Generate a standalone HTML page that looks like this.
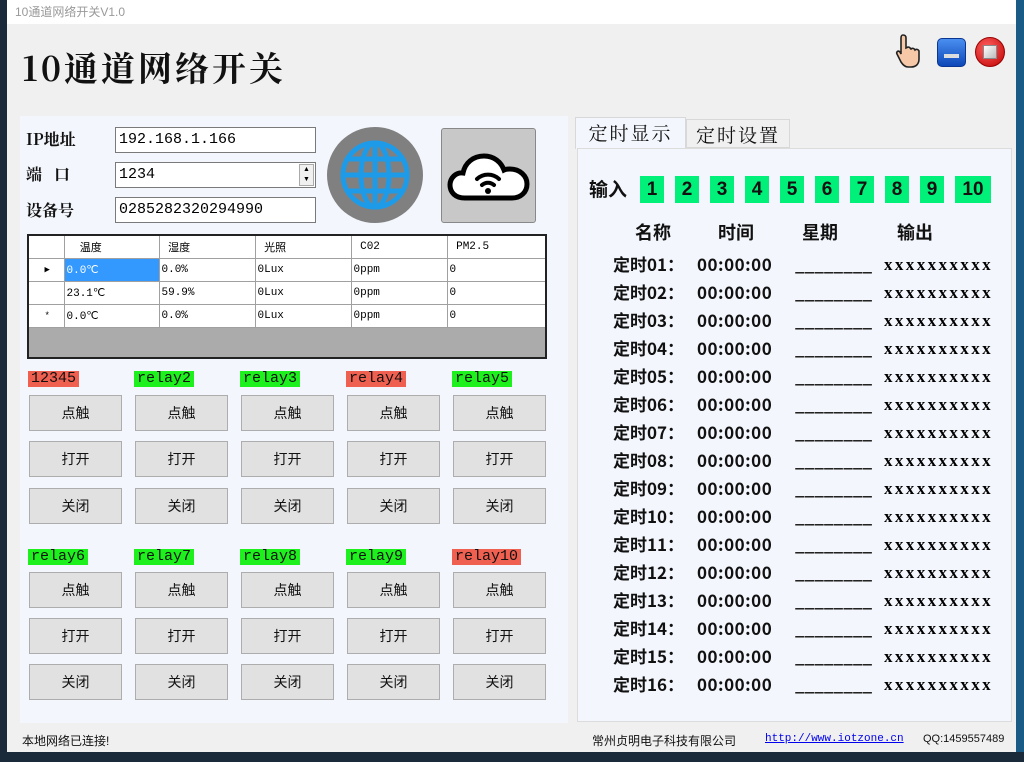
<!DOCTYPE html>
<html><head><meta charset="utf-8"><style>
*{margin:0;padding:0;box-sizing:border-box}
body{width:1024px;height:762px;overflow:hidden;background:#1b2a3a;font-family:"Liberation Sans","Noto Sans CJK SC",sans-serif;position:relative}
.a{position:absolute}
.win{left:7px;top:0;width:1009px;height:752px;background:#f0f0f0}
.tb{left:7px;top:0;width:1009px;height:24px;background:#fff;color:#999;font-size:12px;padding:3px 0 0 8px}
.title{left:22px;top:42px;font-family:"Noto Serif CJK SC",serif;font-weight:bold;font-size:34px;color:#111;letter-spacing:3px}
.lp{left:20px;top:116px;width:548px;height:607px;background:#f3f6fc}
.lbl{font-family:"Noto Serif CJK SC",serif;font-weight:bold;font-size:16px;color:#111}
.inp{background:#fff;border:1px solid #7a7a7a;font-family:"Liberation Mono","Noto Sans CJK SC",monospace;font-size:15px;padding:3px 3px;color:#000}
table{border-collapse:collapse;font-family:"Liberation Mono",monospace;font-size:11px}
td{border:1px solid #a0a0a0;height:23px;padding-left:2px;background:#fff}
.rl{height:16px;font-family:"Liberation Mono",monospace;font-size:15px;padding:0 3px;line-height:16px;color:#111}
.g{background:#1ef01e}.r{background:#f06050}
.bt{width:93px;height:36px;background:#e1e1e1;border:1px solid #adadad;font-size:14px;text-align:center;line-height:34px;color:#111}
.rp{left:577px;top:148px;width:435px;height:574px;background:#f3f6fc;border:1px solid #dcdcdc}
.tab{font-family:"Noto Serif CJK SC",serif;font-size:19px;color:#111;border:1px solid #d8d8d8;text-align:center;letter-spacing:2px}
.nb{width:24px;height:27px;background:#00f07a;font-weight:bold;font-size:19px;text-align:center;line-height:27px;color:#111}
.row{font-weight:bold;font-size:17px;color:#111;white-space:pre;font-family:"Noto Sans CJK SC",sans-serif;line-height:24px;height:24px}
.xx{font-family:"Liberation Serif",serif;font-weight:bold;font-size:17px;letter-spacing:2.4px;line-height:24px}
.st{font-size:12px;color:#111}
</style></head><body>
<div class="a win"></div>
<div class="a tb">10通道网络开关V1.0</div>
<div class="a" style="left:1016px;top:0;width:8px;height:752px;background:#1a5b86"></div>
<div class="a title">10通道网络开关</div>
<svg class="a" style="left:895px;top:33px" width="30" height="36" viewBox="0 0 30 36"><path d="M8 2c2 0 3 1 3 3v10l2-1c2 0 2 1 3 2 1-1 3-1 4 1 1-1 3-1 4 1v8c0 5-3 8-8 8h-3c-3 0-5-2-7-5L2 21c-1-2 1-4 3-2l1 2V5c0-2 1-3 2-3z" fill="#f7c8a8" stroke="#222" stroke-width="1.6"/></svg>
<div class="a" style="left:937px;top:38px;width:29px;height:29px;border-radius:5px;background:linear-gradient(#4a8ff0,#0d47b8);border:1px solid #0a3590"><div style="margin:15px 0 0 6px;width:15px;height:4px;background:#ddd"></div></div>
<div class="a" style="left:975px;top:37px;width:30px;height:30px;border-radius:50%;background:radial-gradient(circle at 40% 35%,#ff6060,#c00000);border:1px solid #900"><div style="margin:7px;width:14px;height:14px;background:linear-gradient(135deg,#fff,#bbb);border:1px solid #888"></div></div>

<div class="a lp"></div>
<div class="a lbl" style="left:26px;top:127px">IP地址</div>
<div class="a lbl" style="left:26px;top:162px">端&nbsp;&nbsp;&nbsp;口</div>
<div class="a lbl" style="left:26px;top:198px">设备号</div>
<div class="a inp" style="left:115px;top:127px;width:201px;height:26px">192.168.1.166</div>
<div class="a inp" style="left:115px;top:162px;width:201px;height:26px">1234</div>
<div class="a" style="left:299px;top:164px;width:15px;height:22px;border:1px solid #aaa;background:#f0f0f0;font-size:7px;line-height:10px;text-align:center">▲<br>▼</div>
<div class="a inp" style="left:115px;top:197px;width:201px;height:26px">0285282320294990</div>
<div class="a" style="left:327px;top:127px;width:96px;height:96px;border-radius:50%;background:#808080"></div>
<svg class="a" style="left:339px;top:138px" width="72" height="74" viewBox="0 0 72 74"><g fill="none" stroke="#1e9be8" stroke-width="5"><circle cx="36" cy="37" r="32"/><ellipse cx="36" cy="37" rx="14" ry="32"/><line x1="36" y1="5" x2="36" y2="69"/><line x1="4" y1="37" x2="68" y2="37"/><path d="M10 21h52M10 53h52"/></g></svg>
<div class="a" style="left:441px;top:128px;width:95px;height:95px;background:#c8c8c8;border:1px solid #888;border-radius:3px"></div>
<svg class="a" style="left:447px;top:152px" width="84" height="50" viewBox="0 0 84 50"><path d="M18 46C8 46 3 40 3 33s6-13 13-12c2-10 10-17 21-17 10 0 17 6 20 14 2-1 4-1 6-1 10 0 17 7 17 15s-6 14-15 14z" fill="#fff" stroke="#000" stroke-width="5"/><g fill="none" stroke="#000" stroke-width="4" stroke-linecap="round"><path d="M30 27a16 16 0 0 1 22 0"/><path d="M35 33a9 9 0 0 1 12 0"/></g><circle cx="41" cy="39" r="3" fill="#000"/></svg>

<table class="a" style="left:27px;top:234px;width:520px;border:2px solid #222">
<tr><td style="width:36px"></td><td style="width:95px">&nbsp;&nbsp;温度</td><td style="width:96px">&nbsp;湿度</td><td style="width:96px">&nbsp;光照</td><td style="width:96px">&nbsp;C02</td><td>&nbsp;PM2.5</td></tr>
<tr><td style="font-size:9px;text-align:center">▶</td><td style="background:#3399ff;color:#fff">0.0℃</td><td>0.0%</td><td>0Lux</td><td>0ppm</td><td>0</td></tr>
<tr><td></td><td>23.1℃</td><td>59.9%</td><td>0Lux</td><td>0ppm</td><td>0</td></tr>
<tr><td style="text-align:center;font-size:9px">*</td><td>0.0℃</td><td>0.0%</td><td>0Lux</td><td>0ppm</td><td>0</td></tr>
<tr><td colspan="6" style="height:31px;background:#ababab;border:none"></td></tr>
</table>

<div class="a rl r" style="left:28px;top:371px">12345</div>
<div class="a rl g" style="left:134px;top:371px">relay2</div>
<div class="a rl g" style="left:240px;top:371px">relay3</div>
<div class="a rl r" style="left:346px;top:371px">relay4</div>
<div class="a rl g" style="left:452px;top:371px">relay5</div>
<div class="a rl g" style="left:28px;top:549px">relay6</div>
<div class="a rl g" style="left:134px;top:549px">relay7</div>
<div class="a rl g" style="left:240px;top:549px">relay8</div>
<div class="a rl g" style="left:346px;top:549px">relay9</div>
<div class="a rl r" style="left:452px;top:549px">relay10</div>

<div id="btns"></div>
<script>
var h='',xs=[29,135,241,347,453],ys=[395,441,488,572,618,664],t=['点触','打开','关闭','点触','打开','关闭'];
ys.forEach(function(y,i){xs.forEach(function(x){h+='<div class="a bt" style="left:'+x+'px;top:'+y+'px">'+t[i]+'</div>'})});
document.getElementById('btns').innerHTML=h;
</script>

<div class="a tab" style="left:575px;top:117px;width:111px;height:32px;background:#f3f6fc;border-bottom:none;line-height:30px">定时显示</div>
<div class="a tab" style="left:686px;top:119px;width:104px;height:29px;background:#f0f0f0;line-height:29px">定时设置</div>
<div class="a rp"></div>
<div class="a row" style="left:589px;top:177px;font-size:19px">输入</div>
<div id="nums"></div>
<div class="a row" style="left:635px;top:220px;font-size:18px">名称</div>
<div class="a row" style="left:718px;top:220px;font-size:18px">时间</div>
<div class="a row" style="left:802px;top:220px;font-size:18px">星期</div>
<div class="a row" style="left:897px;top:220px;font-size:18px">输出</div>
<div id="rows"></div>
<script>
var n='',xs2=[640,675,710,745,780,815,850,885,920,955];
xs2.forEach(function(x,i){n+='<div class="a nb" style="left:'+x+'px;top:176px;'+(i==9?'width:36px':'')+'">'+(i+1)+'</div>'});
document.getElementById('nums').innerHTML=n;
var r='';
for(var i=1;i<=16;i++){var y=252+(i-1)*28;var s=(i<10?'0':'')+i;
r+='<div class="a row" style="left:613px;top:'+y+'px">定时'+s+'：</div><div class="a row" style="left:697px;top:'+y+'px;letter-spacing:0.5px">00:00:00</div><div class="a row" style="left:795px;top:'+y+'px">________</div><div class="a xx" style="left:884px;top:'+(y+1)+'px">xxxxxxxxxx</div>';}
document.getElementById('rows').innerHTML=r;
</script>

<div class="a st" style="left:22px;top:732px">本地网络已连接!</div>
<div class="a st" style="left:592px;top:732px">常州贞明电子科技有限公司</div>
<div class="a st" style="left:765px;top:733px;color:#0000ee;text-decoration:underline;font-family:'Liberation Mono',monospace;font-size:11px">http://www.iotzone.cn</div>
<div class="a st" style="left:923px;top:733px;font-size:11px">QQ:1459557489</div>
</body></html>
